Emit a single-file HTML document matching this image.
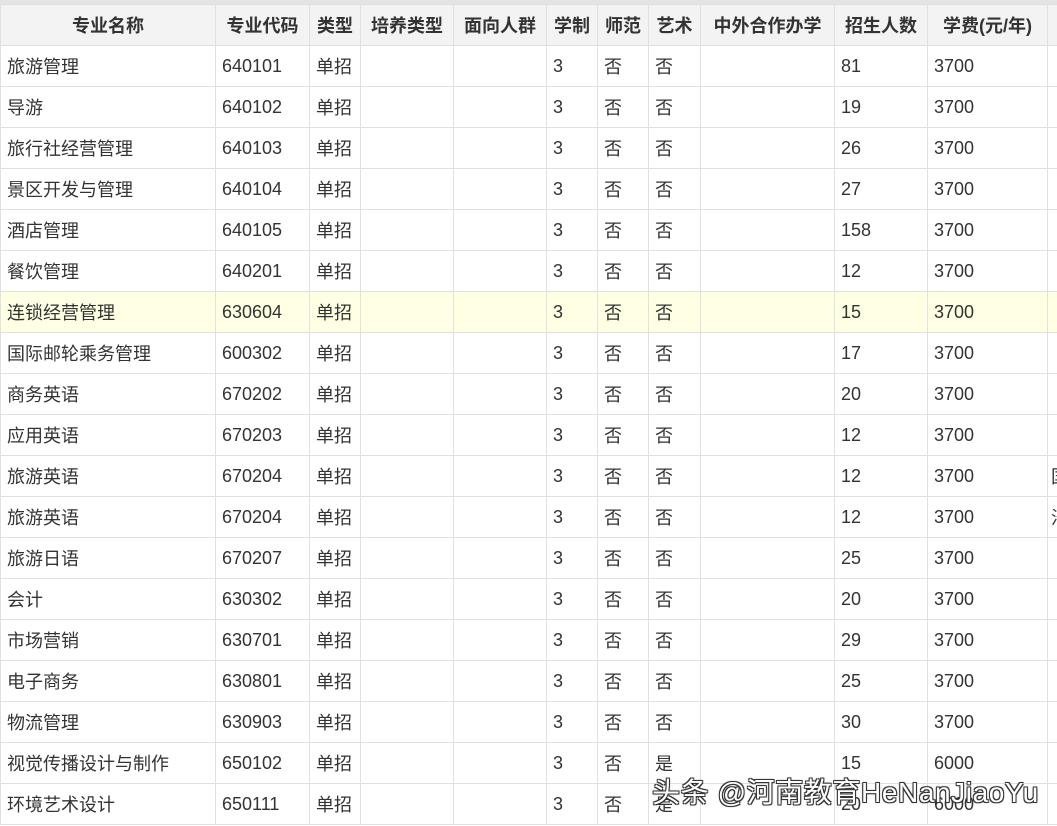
<!DOCTYPE html><html><head><meta charset="utf-8"><style>
body{margin:0;background:#fff;width:1057px;height:826px;overflow:hidden;position:relative;font-family:"Liberation Sans","Noto Sans CJK SC",sans-serif;}
.top{height:4px;background:#e4e4e4;}
table{border-collapse:collapse;table-layout:fixed;width:1058px;}
td,th{border:1px solid #e0e0e0;height:40px;padding:0 0 0 6px;font-size:18px;color:#333;white-space:nowrap;overflow:hidden;text-align:left;font-weight:normal;}
th{background:#f3f3f3;font-weight:bold;font-size:18px;text-align:center;padding:0;color:#333;}
tr.hl td{background:#ffffe3;}
.wm{position:absolute;left:652px;top:771px;font-size:28px;color:#fff;font-family:"Liberation Sans","Noto Sans CJK SC",sans-serif;text-shadow:-1px -1px 0 #333,1px -1px 0 #333,-1px 1px 0 #333,1px 1px 0 #333,0 0 2px #000;letter-spacing:0.6px;}
</style></head><body><div class="top"></div>
<table><colgroup><col style="width:215px"><col style="width:94px"><col style="width:51px"><col style="width:93px"><col style="width:93px"><col style="width:51px"><col style="width:51px"><col style="width:52px"><col style="width:134px"><col style="width:93px"><col style="width:120px"><col style="width:15px"></colgroup>
<tr><th>专业名称</th><th>专业代码</th><th>类型</th><th>培养类型</th><th>面向人群</th><th>学制</th><th>师范</th><th>艺术</th><th>中外合作办学</th><th>招生人数</th><th>学费(元/年)</th><th></th></tr>
<tr><td>旅游管理</td><td>640101</td><td>单招</td><td></td><td></td><td>3</td><td>否</td><td>否</td><td></td><td>81</td><td>3700</td><td></td></tr>
<tr><td>导游</td><td>640102</td><td>单招</td><td></td><td></td><td>3</td><td>否</td><td>否</td><td></td><td>19</td><td>3700</td><td></td></tr>
<tr><td>旅行社经营管理</td><td>640103</td><td>单招</td><td></td><td></td><td>3</td><td>否</td><td>否</td><td></td><td>26</td><td>3700</td><td></td></tr>
<tr><td>景区开发与管理</td><td>640104</td><td>单招</td><td></td><td></td><td>3</td><td>否</td><td>否</td><td></td><td>27</td><td>3700</td><td></td></tr>
<tr><td>酒店管理</td><td>640105</td><td>单招</td><td></td><td></td><td>3</td><td>否</td><td>否</td><td></td><td>158</td><td>3700</td><td></td></tr>
<tr><td>餐饮管理</td><td>640201</td><td>单招</td><td></td><td></td><td>3</td><td>否</td><td>否</td><td></td><td>12</td><td>3700</td><td></td></tr>
<tr class="hl"><td>连锁经营管理</td><td>630604</td><td>单招</td><td></td><td></td><td>3</td><td>否</td><td>否</td><td></td><td>15</td><td>3700</td><td></td></tr>
<tr><td>国际邮轮乘务管理</td><td>600302</td><td>单招</td><td></td><td></td><td>3</td><td>否</td><td>否</td><td></td><td>17</td><td>3700</td><td></td></tr>
<tr><td>商务英语</td><td>670202</td><td>单招</td><td></td><td></td><td>3</td><td>否</td><td>否</td><td></td><td>20</td><td>3700</td><td></td></tr>
<tr><td>应用英语</td><td>670203</td><td>单招</td><td></td><td></td><td>3</td><td>否</td><td>否</td><td></td><td>12</td><td>3700</td><td></td></tr>
<tr><td>旅游英语</td><td>670204</td><td>单招</td><td></td><td></td><td>3</td><td>否</td><td>否</td><td></td><td>12</td><td>3700</td><td style="padding-left:3px">国</td></tr>
<tr><td>旅游英语</td><td>670204</td><td>单招</td><td></td><td></td><td>3</td><td>否</td><td>否</td><td></td><td>12</td><td>3700</td><td style="padding-left:3px">沿</td></tr>
<tr><td>旅游日语</td><td>670207</td><td>单招</td><td></td><td></td><td>3</td><td>否</td><td>否</td><td></td><td>25</td><td>3700</td><td></td></tr>
<tr><td>会计</td><td>630302</td><td>单招</td><td></td><td></td><td>3</td><td>否</td><td>否</td><td></td><td>20</td><td>3700</td><td></td></tr>
<tr><td>市场营销</td><td>630701</td><td>单招</td><td></td><td></td><td>3</td><td>否</td><td>否</td><td></td><td>29</td><td>3700</td><td></td></tr>
<tr><td>电子商务</td><td>630801</td><td>单招</td><td></td><td></td><td>3</td><td>否</td><td>否</td><td></td><td>25</td><td>3700</td><td></td></tr>
<tr><td>物流管理</td><td>630903</td><td>单招</td><td></td><td></td><td>3</td><td>否</td><td>否</td><td></td><td>30</td><td>3700</td><td></td></tr>
<tr><td>视觉传播设计与制作</td><td>650102</td><td>单招</td><td></td><td></td><td>3</td><td>否</td><td>是</td><td></td><td>15</td><td>6000</td><td></td></tr>
<tr><td>环境艺术设计</td><td>650111</td><td>单招</td><td></td><td></td><td>3</td><td>否</td><td>是</td><td></td><td>20</td><td>6000</td><td></td></tr>
</table>
<div class="wm">头条 @河南教育HeNanJiaoYu</div>
</body></html>
